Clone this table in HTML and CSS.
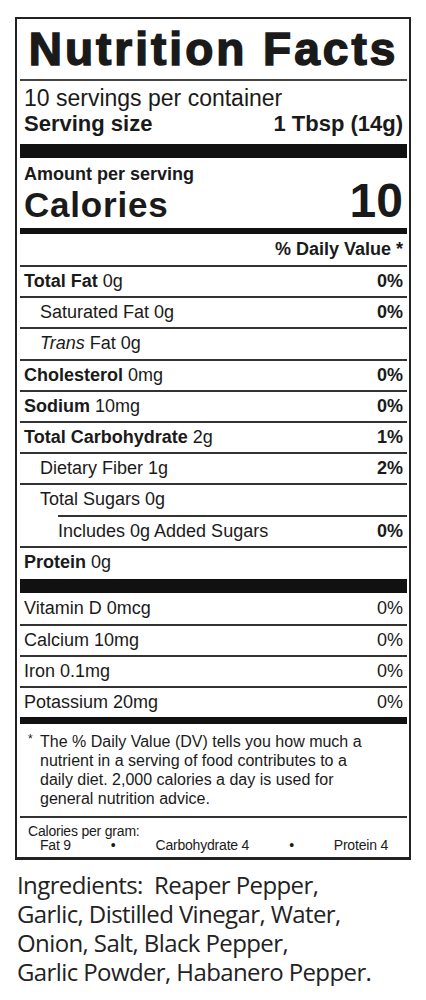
FILE: index.html
```html
<!DOCTYPE html>
<html lang="en">
<head>
    <meta charset="UTF-8">
    <meta name="viewport" content="width=device-width, initial-scale=1.0">
    <title>Nutrition Facts</title>
    <link rel="stylesheet" href="styles.css">
</head>
<body>
    <div class="label">
        <h1 class="title">Nutrition Facts</h1>

        <div class="servings">
            <p class="per">10 servings per container</p>
            <p class="size"><span>Serving size</span><span>1 Tbsp (14g)</span></p>
        </div>
        <div class="bar bar-lg"></div>

        <div class="calories">
            <p class="amount">Amount per serving</p>
            <p class="cal-row"><span class="cal-label">Calories</span><span class="cal-num">10</span></p>
        </div>
        <div class="bar bar-md"></div>

        <div class="dv-head">% Daily Value *</div>

        <div class="row"><span><b>Total Fat</b> 0g</span><b>0%</b></div>
        <div class="row sub"><span>Saturated Fat 0g</span><b>0%</b></div>
        <div class="row sub"><span><i>Trans</i> Fat 0g</span></div>
        <div class="row"><span><b>Cholesterol</b> 0mg</span><b>0%</b></div>
        <div class="row"><span><b>Sodium</b> 10mg</span><b>0%</b></div>
        <div class="row"><span><b>Total Carbohydrate</b> 2g</span><b>1%</b></div>
        <div class="row sub"><span>Dietary Fiber 1g</span><b>2%</b></div>
        <div class="row sub"><span>Total Sugars 0g</span></div>
        <div class="row sub2"><span>Includes 0g Added Sugars</span><b>0%</b></div>
        <div class="row"><span><b>Protein</b> 0g</span></div>
        <div class="bar bar-lg bar-protein"></div>

        <div class="row first"><span>Vitamin D 0mcg</span><span>0%</span></div>
        <div class="row"><span>Calcium 10mg</span><span>0%</span></div>
        <div class="row"><span>Iron 0.1mg</span><span>0%</span></div>
        <div class="row"><span>Potassium 20mg</span><span>0%</span></div>
        <div class="bar bar-foot"></div>

        <div class="footnote">
            <span class="star">*</span>
            <p>The % Daily Value (DV) tells you how much a<br>
            nutrient in a serving of food contributes to a<br>
            daily diet. 2,000 calories a day is used for<br>
            general nutrition advice.</p>
        </div>

        <div class="per-gram">
            <p>Calories per gram:</p>
            <div class="gram-list">
                <span>Fat 9</span>
                <span>&bull;</span>
                <span>Carbohydrate 4</span>
                <span>&bull;</span>
                <span>Protein 4</span>
            </div>
        </div>
    </div>

    <p class="ingredients">Ingredients:&nbsp; Reaper Pepper,<br>
    Garlic, Distilled Vinegar, Water,<br>
    Onion, Salt, Black Pepper,<br>
    Garlic Powder, Habanero Pepper.</p>
</body>
</html>
```

FILE: styles.css
```css
body {
    margin: 0;
    padding: 0;
    background: #fff;
    color: #1a1a1a;
    font-family: "Liberation Sans", Arial, sans-serif;
}

p {
    margin: 0;
}

.label {
    margin: 17px 0 0 15px;
    width: 396px;
    box-sizing: border-box;
    border: 2px solid #222;
    border-bottom-width: 3px;
    padding: 0 2px 0 3px;
}

.title {
    margin: 0;
    height: 60px;
    line-height: 60px;
    font-size: 46px;
    font-weight: 700;
    text-align: center;
    letter-spacing: 3px;
    -webkit-text-stroke: 1.5px #1a1a1a;
    border-bottom: 2px solid #444;
}

.servings {
    padding: 5px 4px 8px;
}

.per {
    font-size: 23px;
    line-height: 25px;
}

.size {
    display: flex;
    justify-content: space-between;
    font-size: 22px;
    font-weight: 700;
    line-height: 25px;
}

.bar {
    background: #111;
}

.bar-lg {
    height: 14px;
}

.bar-protein {
    margin-top: 2px;
}

.bar-md {
    height: 6px;
}

.bar-foot {
    height: 7px;
}

.calories {
    padding: 6px 4px 6px;
}

.amount {
    font-size: 18px;
    font-weight: 700;
    line-height: 20px;
}

.cal-row {
    display: flex;
    justify-content: space-between;
    align-items: baseline;
    line-height: 34px;
    font-weight: 700;
}

.cal-label {
    font-size: 35px;
    letter-spacing: 0.8px;
}

.cal-num {
    font-size: 48px;
}

.dv-head {
    height: 31px;
    line-height: 31px;
    padding: 0 4px;
    text-align: right;
    font-size: 18px;
    font-weight: 700;
}

.row {
    display: flex;
    justify-content: space-between;
    height: 29.2px;
    line-height: 29px;
    padding: 0 4px;
    font-size: 18px;
    border-top: 2px solid #333;
}

.row.sub {
    padding-left: 20px;
}

.row.sub2 {
    margin-left: 38px;
    padding-left: 0;
}

.row.first {
    border-top: none;
    height: 31px;
    line-height: 31px;
}

.footnote {
    display: flex;
    padding: 8px 4px 8px;
    border-bottom: 2px solid #333;
    font-size: 16px;
    line-height: 19px;
}

.star {
    width: 16px;
    padding-left: 4px;
    box-sizing: border-box;
    font-size: 12px;
    line-height: 14px;
}

.per-gram {
    padding: 6px 4px 5px 8px;
    font-size: 14px;
    line-height: 14px;
    letter-spacing: -0.2px;
}

.gram-list {
    display: flex;
    justify-content: space-between;
    padding: 0 15px 0 12px;
}

.ingredients {
    margin: 10px 0 0 17px;
    font-family: "Open Sans", sans-serif;
    font-size: 24px;
    line-height: 29px;
    letter-spacing: -0.6px;
    color: #222;
}
```
